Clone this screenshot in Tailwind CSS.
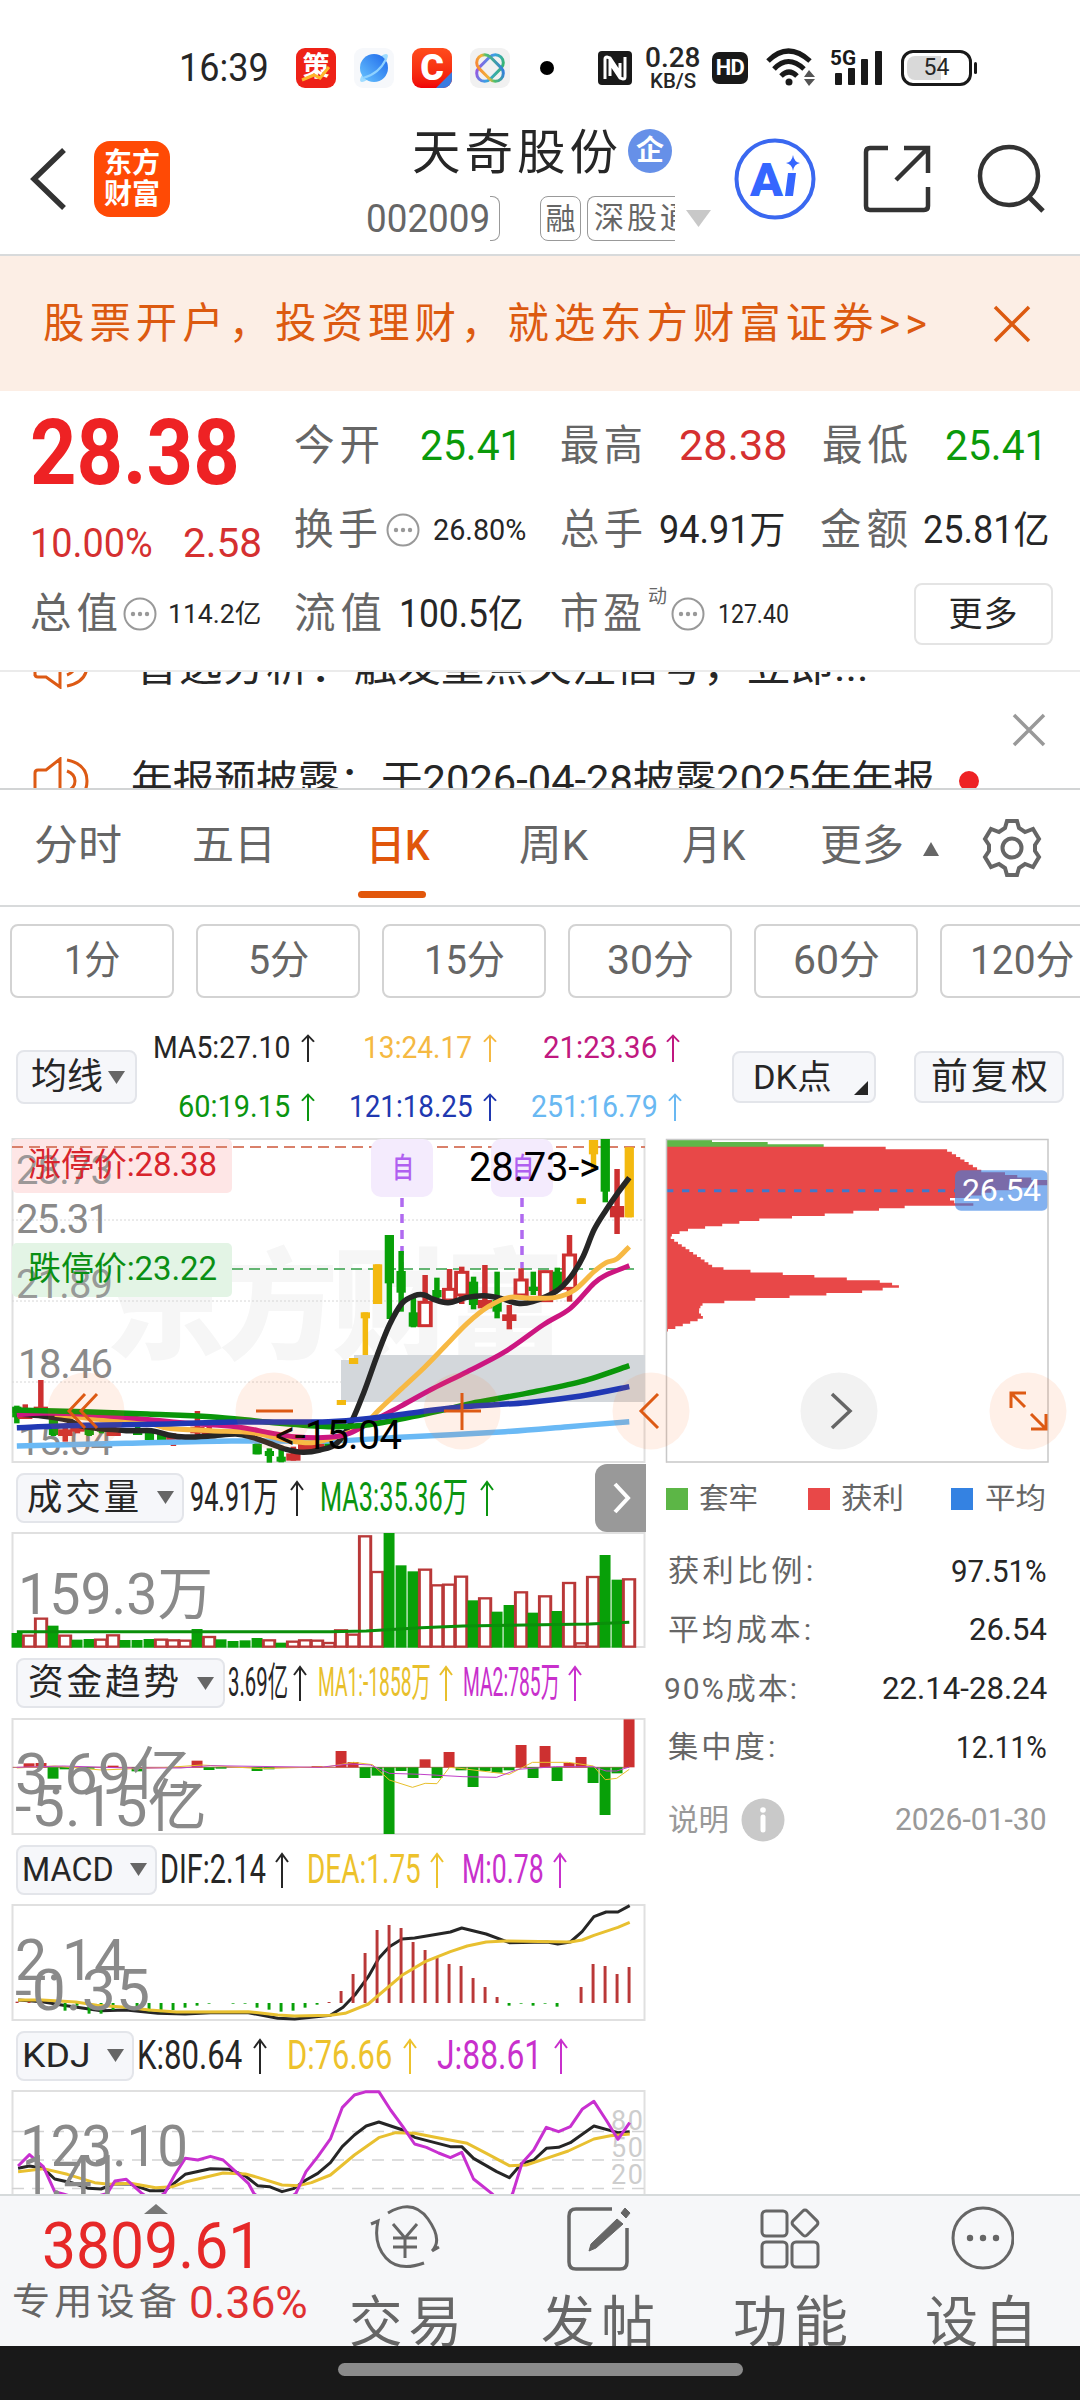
<!DOCTYPE html>
<html lang="zh-CN">
<head>
<meta charset="utf-8">
<title>天奇股份 002009</title>
<script src="https://cdn.jsdelivr.net/npm/@tailwindcss/browser@4"></script>
</head>
<body class="bg-white">
<svg class="hidden">
  <symbol id="up" viewBox="0 0 14 36" preserveAspectRatio="none"><path d="M7 36V2M1 10L7 2l6 8" fill="none" stroke="currentColor" stroke-width="2"/></symbol>
  <symbol id="down" viewBox="0 0 17 13"><path d="M0 0h17L8.500 13z" fill="#666"/></symbol>
  <symbol id="dots" viewBox="0 0 36 36"><circle cx="18" cy="18" r="15.500" fill="none" stroke="#999" stroke-width="2"/><g fill="#999"><circle cx="11" cy="18" r="2.200"/><circle cx="18" cy="18" r="2.200"/><circle cx="25" cy="18" r="2.200"/></g></symbol>
  <symbol id="horn" viewBox="0 0 58 48"><g fill="none" stroke="#dd5a14" stroke-width="3"><path d="M2 35V16q0-3 3-3h8L27 2v44L13 36H5q-3 0-3-3z"/><path d="M34 14q8 3 8 10t-8 10M34 3q20 4 20 21T34 45"/></g></symbol>
</svg>
<div class="w-[1080px] h-[2400px] overflow-hidden flex flex-col bg-white text-[#262626] leading-none font-['Roboto','Noto_Sans_CJK_SC',sans-serif]">

  <!-- status bar -->
  <div class="h-[115px] shrink-0 pt-5 flex items-center">
    <div data-fit class="ml-[179px] w-[90px] text-[38px]">16:39</div>
    <div class="ml-[27px] w-10 h-10 rounded-[9px] bg-[#ee2117] text-white flex items-center justify-center text-[27px] font-bold relative">策<svg class="absolute left-1 bottom-1.5 w-8 h-4" viewBox="0 0 32 16"><path d="M2 14l12-5 6 3 9-11" fill="none" stroke="#ffb52b" stroke-width="3"/></svg></div>
    <svg class="ml-[18px] w-10 h-10" viewBox="0 0 40 40"><defs><linearGradient id="pl" x1="0" y1="1" x2="1" y2="0"><stop offset="0" stop-color="#6ac6ff"/><stop offset="1" stop-color="#1c66ea"/></linearGradient></defs><rect width="40" height="40" rx="9" fill="#f6f8fb"/><ellipse cx="20" cy="20" rx="19" ry="5" transform="rotate(-45 20 20)" fill="#9fdcff"/><circle cx="20" cy="20" r="14" fill="url(#pl)"/><path d="M9 30Q25 26 32 11" stroke="#8fd2ff" stroke-width="2" fill="none"/></svg>
    <div class="ml-[18px] w-10 h-10 rounded-[9px] bg-linear-to-b from-[#ff4b1c] to-[#f00008] text-white flex items-center justify-center text-[36px] font-black relative overflow-hidden">C<svg class="absolute right-0 bottom-0 w-4 h-4" viewBox="0 0 16 16"><path d="M16 0v16H0z" fill="#3a7be0"/></svg></div>
    <svg class="ml-[18px] w-10 h-10" viewBox="0 0 40 40"><defs><linearGradient id="at" x1="0" y1="0" x2="1" y2="1"><stop offset="0" stop-color="#f77b35"/><stop offset=".35" stop-color="#f2b43a"/><stop offset=".5" stop-color="#4fc26a"/><stop offset="1" stop-color="#2d73f0"/></linearGradient><linearGradient id="at2" x1="1" y1="0" x2="0" y2="1"><stop offset="0" stop-color="#35b95c"/><stop offset=".5" stop-color="#3aa0e6"/><stop offset="1" stop-color="#a34fe0"/></linearGradient></defs><rect width="40" height="40" rx="9" fill="#f1f1f1"/><rect x="12" y="4.500" width="16" height="31" rx="8" transform="rotate(45 20 20)" fill="none" stroke="url(#at2)" stroke-width="3"/><rect x="12" y="4.500" width="16" height="31" rx="8" transform="rotate(-45 20 20)" fill="none" stroke="url(#at)" stroke-width="3"/></svg>
    <div class="ml-[30px] w-3.5 h-3.5 rounded-full bg-black"></div>
    <svg class="ml-[44px] w-[34px] h-[34px]" viewBox="0 0 34 34"><rect width="34" height="34" rx="4" fill="#191919"/><path d="M7 28V8q0-2 2-2l3 1 10 15V12M27 6v20q0 2-2 2l-3-1L12 12v13" fill="none" stroke="#fff" stroke-width="3"/></svg>
    <div class="ml-[12px] w-[58px] flex flex-col items-center font-medium"><span data-fit class="w-[56px] text-[27px]">0.28</span><span data-fit class="w-[46px] text-[20px] -mt-px">KB/S</span></div>
    <div class="ml-[10px] w-9 h-8 rounded-[7px] bg-[#191919] text-white text-[22px] font-bold flex items-center justify-center tracking-tight">HD</div>
    <svg class="ml-[18px] w-[50px] h-10" viewBox="0 0 50 40"><g fill="none" stroke="#191919" stroke-width="5"><path d="M2 13q20-20 42 0M8 21q14-15 30 0"/><path d="M15 28q8-8 16 0"/></g><circle cx="23" cy="34" r="3.500" fill="#191919"/><path d="M38 29l5-7 6 7zM38 31l5 7 6-7z" fill="#555"/></svg>
    <svg class="ml-[14px] w-[54px] h-10" viewBox="0 0 54 40"><g fill="#191919"><rect x="5" y="25" width="7" height="12" rx="1"/><rect x="18" y="20" width="7" height="17" rx="1"/><rect x="31" y="11" width="7" height="26" rx="1"/><rect x="45" y="3" width="7" height="34" rx="1"/><text x="0" y="17" font-size="20" font-weight="700" textLength="26" lengthAdjust="spacingAndGlyphs">5G</text></g></svg>
    <div class="ml-[17px] w-[71px] h-[36px] rounded-xl border-[3px] border-[#191919] p-[3px] relative"><div class="w-[34px] h-full rounded-l-lg bg-[#d9d9d9]"></div><span class="absolute inset-0 flex items-center justify-center text-[23px]">54</span></div>
    <div class="ml-[2px] w-[3px] h-3 rounded bg-[#191919]"></div>
  </div>

  <!-- title bar -->
  <div class="h-[141px] shrink-0 border-b-2 border-[#d8dadb] flex">
    <svg class="ml-[30px] mt-[32px] w-[38px] h-[64px]" viewBox="0 0 38 64"><path d="M34 3L4 32l30 29" fill="none" stroke="#333" stroke-width="5.500"/></svg>
    <div class="ml-[26px] mt-[26px] w-[76px] h-[76px] rounded-2xl bg-[#ff4a05] text-white text-[28px] leading-[31px] font-bold flex flex-col items-center justify-center"><span>东方</span><span>财富</span></div>
    <div class="ml-[194px] w-[350px] pt-[10px]">
      <div class="pl-[48px] flex items-center"><span data-fit class="w-[206px] text-[48px] leading-[56px] tracking-[4px]">天奇股份</span><span class="ml-[10px] w-11 h-11 mt-[-4px] rounded-full bg-[#6690e8] text-white text-[28px] font-bold flex items-center justify-center">企</span></div>
      <div class="mt-[15px] flex items-center text-[#666]"><span data-fit class="ml-[2px] w-[124px] text-[38px]">002009</span><span class="w-2.5 h-[45px] border border-l-0 border-[#999] rounded-r-lg"></span><span class="ml-[40px] w-[41px] h-[45px] text-[30px] rounded-lg border border-[#999] flex items-center justify-center">融</span><span class="ml-[6px] w-[88px] h-[45px] overflow-hidden rounded-l-lg border border-r-0 border-[#999] pl-[6px] text-[30px] leading-[42px] tracking-[3px] whitespace-nowrap">深股通</span><svg class="ml-[11px] w-[25px] h-[17px]" viewBox="0 0 25 17"><path d="M0 0h25L12.500 17z" fill="#c8c8c8"/></svg></div>
    </div>
    <svg class="ml-[20px] mt-[22px] w-[84px] h-[84px]" viewBox="0 0 84 84"><circle cx="41" cy="42" r="38.500" fill="none" stroke="#3a68f0" stroke-width="4"/><text x="16" y="59" font-size="47" font-weight="900" fill="#3566ff" textLength="33" lengthAdjust="spacingAndGlyphs">A</text><path d="M54 36h8l-3 23h-8zM59 18q1 7 7 8-6 1-7 8-1-7-7-8 6-1 7-8z" fill="#3566ff"/></svg>
    <svg class="ml-[44px] mt-[28px] w-[72px] h-[72px]" viewBox="0 0 72 72"><path d="M26 5H8q-4 0-4 4v54q0 4 4 4h54q4 0 4-4V44M42 5h24v25M66 5L34 37" fill="none" stroke="#333" stroke-width="4.500"/></svg>
    <svg class="ml-[41px] mt-[26px] w-[74px] h-[74px]" viewBox="0 0 74 74"><circle cx="34" cy="35" r="29" fill="none" stroke="#333" stroke-width="4.500"/><path d="M54 56l14 14" stroke="#333" stroke-width="5"/></svg>
  </div>

  <!-- promo banner -->
  <div class="h-[135px] shrink-0 bg-[#fceee5] text-[#dc5a10] flex items-center">
    <div data-fit class="ml-[43px] w-[884px] text-[42px] tracking-[5px]">股票开户，投资理财，就选东方财富证券&gt;&gt;</div>
    <svg class="ml-[66px] w-[38px] h-[38px]" viewBox="0 0 38 38"><path d="M2 2l34 34M36 2L2 36" stroke="currentColor" stroke-width="3.500"/></svg>
  </div>

  <!-- quote summary -->
  <div class="h-[281px] shrink-0 border-b-2 border-[#ebebeb] relative flex">
    <div class="ml-[30px] w-[235px] pt-[16px] text-[#ee2224]">
      <div data-fit class="w-[210px] text-[90px] leading-[94px] font-bold">28.38</div>
      <div class="mt-[23px] flex text-[40px] text-[#d53030]"><span data-fit class="w-[123px]">10.00%</span><span data-fit class="ml-[30px] w-[79px]">2.58</span></div>
      <div class="mt-[25px] h-[50px] flex items-center"><span data-fit class="w-[88px] text-[42px] tracking-[5px] text-[#666]">总值</span><svg class="ml-[4px] w-9 h-9"><use href="#dots"/></svg><span data-fit class="ml-[10px] w-[93px] text-[26px] text-[#262626]">114.2亿</span></div>
    </div>
    <div class="ml-[29px] w-[786px] pt-[30px] flex flex-col gap-[34px]">
      <div class="h-[50px] flex items-center text-[42px]">
        <span data-fit class="w-[86px] tracking-[5px] text-[#666]">今开</span><span data-fit class="ml-[40px] w-[103px] text-[#0a9a0a]">25.41</span>
        <span data-fit class="ml-[37px] w-[83px] tracking-[5px] text-[#666]">最高</span><span data-fit class="ml-[36px] w-[109px] text-[#d53030]">28.38</span>
        <span data-fit class="ml-[34px] w-[86px] tracking-[5px] text-[#666]">最低</span><span data-fit class="ml-[37px] w-[103px] text-[#0a9a0a]">25.41</span>
      </div>
      <div class="h-[50px] flex items-center text-[42px]">
        <span data-fit class="w-[84px] tracking-[5px] text-[#666]">换手</span><svg class="ml-[7px] w-9 h-9"><use href="#dots"/></svg><span data-fit class="ml-[12px] w-[93px] text-[30px]">26.80%</span>
        <span data-fit class="ml-[34px] w-[83px] tracking-[5px] text-[#666]">总手</span><span data-fit class="ml-[16px] w-[126px] text-[38px]">94.91万</span>
        <span data-fit class="ml-[35px] w-[88px] tracking-[5px] text-[#666]">金额</span><span data-fit class="ml-[15px] w-[126px] text-[38px]">25.81亿</span>
      </div>
      <div class="h-[50px] flex items-center text-[42px]">
        <span data-fit class="w-[88px] tracking-[5px] text-[#666]">流值</span><span data-fit class="ml-[17px] w-[124px] text-[38px]">100.5亿</span>
        <span data-fit class="ml-[37px] w-[82px] tracking-[5px] text-[#666]">市盈</span><span class="ml-[6px] -mt-9 w-5 text-[19px] text-[#666]">动</span><svg class="ml-[2px] w-9 h-9"><use href="#dots"/></svg><span data-fit class="ml-[12px] w-[71px] text-[25px]">127.40</span>
        <span class="ml-[125px] w-[139px] h-[62px] shrink-0 rounded-lg border-2 border-[#e4e4e4] flex items-center justify-center text-[34px] tracking-[1px]">更多</span>
      </div>
    </div>
  </div>

  <!-- rolling news -->
  <div class="h-[118px] shrink-0 border-b-2 border-[#d2d4d5] relative overflow-hidden text-[40px] flex flex-col">
    <div class="-mt-[27px] h-[46px] shrink-0 flex items-center"><svg class="ml-[33px] w-[58px] h-[48px] -mt-1.5"><use href="#horn"/></svg><span data-fit class="ml-[44px] w-[734px]">智选分析：触发重点关注信号，立即...</span></div>
    <svg class="self-end mr-[34px] mt-[22px] w-[34px] h-[34px] shrink-0" viewBox="0 0 34 34"><path d="M2 2l30 30M32 2L2 32" stroke="#999" stroke-width="3.500"/></svg>
    <div class="mt-[11px] h-[46px] shrink-0 flex items-center"><svg class="ml-[33px] w-[58px] h-[48px]"><use href="#horn"/></svg><span data-fit class="ml-[40px] w-[804px]">年报预披露：于2026-04-28披露2025年年报</span><span class="ml-[24px] w-5 h-5 rounded-full bg-[#ee2224]"></span></div>
  </div>

  <!-- period tabs -->
  <div class="h-[117px] shrink-0 border-b-2 border-[#d8dadb] flex text-[42px] text-[#666]">
    <span data-fit class="ml-[34px] w-[88px] leading-[112px]">分时</span>
    <span data-fit class="ml-[70px] w-[84px] leading-[112px]">五日</span>
    <span class="ml-[82px] w-[68px] flex flex-col text-[#e0560b] font-medium"><span data-fit class="ml-[8px] w-[64px] h-[101px] leading-[112px]">日K</span><span class="h-[7px] rounded bg-[#e2570b]"></span></span>
    <span data-fit class="ml-[93px] w-[69px] leading-[112px]">周K</span>
    <span data-fit class="ml-[94px] w-[63px] leading-[112px]">月K</span>
    <span data-fit class="ml-[75px] w-[84px] leading-[112px]">更多</span>
    <svg class="ml-[19px] mt-[52px] w-4 h-3.5" viewBox="0 0 16 14"><path d="M0 14L8 0l8 14z" fill="#666"/></svg>
    <svg class="ml-[42px] mt-[27px] w-[62px] h-[62px]" viewBox="0 0 62 62"><g fill="none" stroke="#666" stroke-width="4"><path d="M26 4h10l2 7 6 4 8-3 6 10-4 6v6l4 6-6 10-8-3-6 4-2 7H26l-2-7-6-4-8 3-6-10 4-6v-6l-4-6 6-10 8 3 6-4z"/><circle cx="31" cy="31" r="9.500"/></g></svg>
  </div>

  <!-- minute periods -->
  <div class="h-[113px] shrink-0 pt-[17px] pl-[10px] flex gap-[22px] overflow-hidden text-[40px] text-[#666]">
    <div class="w-[164px] h-[74px] shrink-0 rounded-lg border-2 border-[#d3d3d3] flex items-center justify-center"><span data-fit class="w-[56px]">1分</span></div>
    <div class="w-[164px] h-[74px] shrink-0 rounded-lg border-2 border-[#d3d3d3] flex items-center justify-center"><span data-fit class="w-[61px]">5分</span></div>
    <div class="w-[164px] h-[74px] shrink-0 rounded-lg border-2 border-[#d3d3d3] flex items-center justify-center"><span data-fit class="w-[81px]">15分</span></div>
    <div class="w-[164px] h-[74px] shrink-0 rounded-lg border-2 border-[#d3d3d3] flex items-center justify-center"><span data-fit class="w-[87px]">30分</span></div>
    <div class="w-[164px] h-[74px] shrink-0 rounded-lg border-2 border-[#d3d3d3] flex items-center justify-center"><span data-fit class="w-[87px]">60分</span></div>
    <div class="w-[164px] h-[74px] shrink-0 rounded-lg border-2 border-[#d3d3d3] flex items-center justify-center"><span data-fit class="w-[104px]">120分</span></div>
  </div>

  <!-- moving-average legend -->
  <div class="h-[118px] shrink-0 flex">
    <div class="ml-[16px] mt-[30px] w-[121px] h-[54px] rounded-lg border-2 border-[#e3e5ea] bg-[#f6f7fa] flex items-center pl-[13px]"><span data-fit class="w-[72px] text-[36px]">均线</span><svg class="ml-[5px] w-[17px] h-[13px]"><use href="#down"/></svg></div>
    <div class="ml-[15px] w-[530px] pt-[10px] flex flex-col gap-[24px] text-[31px]">
      <div class="h-[35px] flex items-center"><span data-fit class="w-[137px] ml-px">MA5:27.10</span><svg class="ml-[11px] w-3.5 h-7"><use href="#up"/></svg>
        <span class="flex items-center text-[#f5b942]"><span data-fit class="ml-[48px] w-[109px]">13:24.17</span><svg class="ml-[11px] w-3.5 h-7"><use href="#up"/></svg></span>
        <span class="flex items-center text-[#c01880]"><span data-fit class="ml-[46px] w-[114px]">21:23.36</span><svg class="ml-[9px] w-3.5 h-7"><use href="#up"/></svg></span></div>
      <div class="h-[35px] flex items-center"><span class="flex items-center text-[#0a9510]"><span data-fit class="ml-[26px] w-[112px]">60:19.15</span><svg class="ml-[11px] w-3.5 h-7"><use href="#up"/></svg></span>
        <span class="flex items-center text-[#2038b0]"><span data-fit class="ml-[34px] w-[124px]">121:18.25</span><svg class="ml-[10px] w-3.5 h-7"><use href="#up"/></svg></span>
        <span class="flex items-center text-[#69b8f2]"><span data-fit class="ml-[34px] w-[127px]">251:16.79</span><svg class="ml-[10px] w-3.5 h-7"><use href="#up"/></svg></span></div>
    </div>
    <div class="ml-[50px] mt-[31px] w-[144px] h-[52px] rounded-lg border-2 border-[#e3e5ea] bg-[#f6f7fa] flex items-center pl-[19px] relative"><span data-fit class="w-[79px] text-[34px]">DK点</span><svg class="absolute right-[6px] bottom-[6px] w-3.5 h-3.5" viewBox="0 0 14 14"><path d="M14 0v14H0z" fill="#262626"/></svg></div>
    <div class="ml-[38px] mt-[31px] w-[150px] h-[52px] rounded-lg border-2 border-[#e3e5ea] bg-[#f6f7fa] flex items-center justify-center"><span data-fit class="w-[117px] text-[36px] tracking-[3px]">前复权</span></div>
  </div>

  <!-- charts -->
  <div class="h-[1056px] shrink-0 relative flex overflow-hidden">
    <div class="w-[646px] flex flex-col">
      <svg class="h-[325px] shrink-0" viewBox="0 1138 646 325">
        <rect x="12.500" y="1139" width="632" height="323" fill="none" stroke="#e0e0e0" stroke-width="2"/>
        <text x="105" y="1350" font-size="120" font-weight="900" fill="#f6f6f6" textLength="460">东方财富</text>
        <path d="M12 1220H645M12 1301H645M12 1382H645" stroke="#d6d6d6" stroke-dasharray="2 2"/>
        <rect x="12" y="1139" width="220" height="54" rx="5" fill="#fee6e6"/><rect x="12" y="1243" width="220" height="54" rx="5" fill="#e3f4e5"/>
        <g font-size="40" fill="#8a8a8a"><g fill-opacity=".85"><text x="16" y="1184" textLength="97">28.73</text></g><text x="16" y="1233" textLength="94">25.31</text><g fill-opacity=".85"><text x="16" y="1298" textLength="97">21.89</text></g><text x="18" y="1378" textLength="95">18.46</text><text x="18" y="1455" textLength="95">15.04</text></g>
        <path d="M341 1360h13v-5h291v47H341z" fill="#d3d7db"/>
        <path d="M12 1147H645" stroke="#d9806a" stroke-width="2" stroke-dasharray="11 6"/>
        <path d="M232 1269H640" stroke="#35a048" stroke-width="1.500" stroke-dasharray="11 6"/>
        <text x="28" y="1176" font-size="33" fill="#d8242c" textLength="189">涨停价:28.38</text>
        <text x="28" y="1280" font-size="33" fill="#0a8f14" textLength="189">跌停价:23.22</text>
        <rect x="371" y="1139" width="62" height="58" rx="10" fill="#f4ebfd"/><rect x="491" y="1139" width="62" height="58" rx="10" fill="#f4ebfd"/>
        <path d="M402 1198v70M522 1198v70" stroke="#b06af0" stroke-width="3.500" stroke-dasharray="9 7"/>
        <g font-size="28" fill="#b060f0" font-weight="500"><text x="392" y="1178" textLength="22" lengthAdjust="spacingAndGlyphs">自</text><text x="512" y="1178" textLength="22" lengthAdjust="spacingAndGlyphs">自</text></g>
        <g id="candles" transform="translate(0 1240) scale(.42092 .33333)"></g>
        <g id="ma" transform="translate(0 1240) scale(.42092 .33333)"></g>
        <text x="275" y="1449" font-size="40" textLength="127">&lt;-15.04</text>
        <text x="469" y="1181" font-size="40" textLength="131">28.73-&gt;</text>
      </svg>

      <div class="h-[69px] shrink-0 pl-4 flex items-center text-[40px]">
        <div class="w-[168px] h-[50px] rounded-lg border-2 border-[#e3e5ea] bg-[#f6f7fa] flex items-center pl-[9px]"><span data-fit class="w-[112px] text-[36px] tracking-[3px]">成交量</span><svg class="ml-[18px] w-[17px] h-[13px]"><use href="#down"/></svg></div>
        <span data-fit class="ml-[6px] w-[88px]">94.91万</span><svg class="ml-[12px] w-3.5 h-9"><use href="#up"/></svg>
        <span class="flex items-center text-[#0a9510]"><span data-fit class="ml-[16px] w-[148px]">MA3:35.36万</span><svg class="ml-[12px] w-3.5 h-9"><use href="#up"/></svg></span>
        <div class="ml-auto w-[51px] h-[68px] rounded-l-xl bg-[#999] flex items-center justify-center"><svg class="w-6 h-8" viewBox="0 0 24 32"><path d="M6 2l13 14L6 30" fill="none" stroke="#fff" stroke-width="4"/></svg></div>
      </div>
      <svg class="h-[116px] shrink-0" viewBox="0 1532 646 116">
        <rect x="12.500" y="1533" width="632" height="114" fill="none" stroke="#e0e0e0" stroke-width="2"/>
        <g id="volume" transform="translate(0 1460) scale(.42092 .33333)"></g>
        <text x="18" y="1614" font-size="57" fill="#8a8a8a" textLength="195" lengthAdjust="spacingAndGlyphs">159.3万</text>
      </svg>

      <div class="h-[70px] shrink-0 pl-4 flex items-center text-[40px]">
        <div class="w-[209px] h-[50px] rounded-lg border-2 border-[#e3e5ea] bg-[#f6f7fa] flex items-center pl-[10px]"><span data-fit class="w-[151px] text-[36px] tracking-[3px]">资金趋势</span><svg class="ml-[18px] w-[17px] h-[13px]"><use href="#down"/></svg></div>
        <span data-fit class="ml-[3px] w-[60px]">3.69亿</span><svg class="ml-[5px] w-3.5 h-9"><use href="#up"/></svg>
        <span class="flex items-center text-[#e8bf2c]"><span data-fit class="ml-[11px] w-[113px]">MA1:-1858万</span><svg class="ml-[8px] w-3.5 h-9"><use href="#up"/></svg></span>
        <span class="flex items-center text-[#c830cc]"><span data-fit class="ml-[10px] w-[97px]">MA2:785万</span><svg class="ml-[8px] w-3.5 h-9"><use href="#up"/></svg></span>
      </div>
      <svg class="h-[117px] shrink-0" viewBox="0 1718 646 117">
        <rect x="12.500" y="1719" width="632" height="115" fill="none" stroke="#e0e0e0" stroke-width="2"/>
        <g id="fund" transform="translate(0 1460) scale(.42092 .33333)"></g>
        <g font-size="57" fill="#8a8a8a"><text x="15" y="1794" textLength="176" lengthAdjust="spacingAndGlyphs">3.69亿</text><text x="15" y="1826" textLength="192" lengthAdjust="spacingAndGlyphs">-5.15亿</text></g>
      </svg>

      <div class="h-[69px] shrink-0 pl-4 flex items-center text-[40px]">
        <div class="w-[141px] h-[50px] rounded-lg border-2 border-[#e3e5ea] bg-[#f6f7fa] flex items-center pl-[4px]"><span data-fit class="w-[92px] text-[33px]">MACD</span><svg class="ml-[16px] w-[17px] h-[13px]"><use href="#down"/></svg></div>
        <span data-fit class="ml-[3px] w-[106px]">DIF:2.14</span><svg class="ml-[9px] w-3.5 h-9"><use href="#up"/></svg>
        <span class="flex items-center text-[#edc22c]"><span data-fit class="ml-[18px] w-[114px]">DEA:1.75</span><svg class="ml-[9px] w-3.5 h-9"><use href="#up"/></svg></span>
        <span class="flex items-center text-[#c830cc]"><span data-fit class="ml-[18px] w-[82px]">M:0.78</span><svg class="ml-[9px] w-3.5 h-9"><use href="#up"/></svg></span>
      </div>
      <svg class="h-[117px] shrink-0" viewBox="0 1904 646 117">
        <rect x="12.500" y="1905" width="632" height="115" fill="none" stroke="#e0e0e0" stroke-width="2"/>
        <g id="macd" transform="translate(0 1820) scale(.42092 .33333)"></g>
        <g font-size="57" fill="#8a8a8a"><text x="15" y="1980" textLength="111" lengthAdjust="spacingAndGlyphs">2.14</text><text x="15" y="2010" textLength="135" lengthAdjust="spacingAndGlyphs">-0.35</text></g>
      </svg>

      <div class="h-[69px] shrink-0 pl-4 flex items-center text-[40px]">
        <div class="w-[118px] h-[50px] rounded-lg border-2 border-[#e3e5ea] bg-[#f6f7fa] flex items-center pl-[4px]"><span data-fit class="w-[69px] text-[33px]">KDJ</span><svg class="ml-[16px] w-[17px] h-[13px]"><use href="#down"/></svg></div>
        <span data-fit class="ml-[3px] w-[105px]">K:80.64</span><svg class="ml-[11px] w-3.5 h-9"><use href="#up"/></svg>
        <span class="flex items-center text-[#edc22c]"><span data-fit class="ml-[20px] w-[105px]">D:76.66</span><svg class="ml-[11px] w-3.5 h-9"><use href="#up"/></svg></span>
        <span class="flex items-center text-[#c830cc]"><span data-fit class="ml-[20px] w-[105px]">J:88.61</span><svg class="ml-[12px] w-3.5 h-9"><use href="#up"/></svg></span>
      </div>
      <svg class="h-[104px] shrink-0" viewBox="0 2090 646 104">
        <rect x="12.500" y="2091" width="632" height="120" fill="none" stroke="#e0e0e0" stroke-width="2"/>
        <path d="M12 2131.500H645M12 2160H645M12 2188.500H645" stroke="#d3d3d3" stroke-width="1.500" stroke-dasharray="12 8"/>
        <g font-size="27" fill="#cdcdcd"><text x="611" y="2130" textLength="32">80</text><text x="611" y="2157" textLength="32">50</text><text x="611" y="2184" textLength="32">20</text></g>
        <g id="kdj" transform="translate(0 1820) scale(.42092 .33333)"></g>
        <g font-size="57" fill="#8a8a8a"><text x="20" y="2166" textLength="168" lengthAdjust="spacingAndGlyphs">123.10</text><text x="22" y="2196" textLength="98" lengthAdjust="spacingAndGlyphs">1.41</text></g>
      </svg>
    </div>

    <div class="w-[434px] flex flex-col">
      <svg class="h-[325px] w-[434px] shrink-0" viewBox="646 1138 434 325">
        <g transform="translate(640 1120) scale(.33333)">
          <path d="M78 58H216v8H383v7H551v8H78z" fill="#5fb648"/>
          <path id="chips" fill="#e84848"/>
          <path d="M78 212H945" stroke="#4377c9" stroke-width="9" stroke-dasharray="22 26"/>
          <rect x="945" y="151" width="279" height="121" rx="18" fill="#3781e5" fill-opacity=".62"/>
        </g>
        <path d="M666.500 1139.500H1048V1462H666.500z" fill="none" stroke="#c8c8c8" stroke-width="1.500"/>
        <text x="962" y="1201" font-size="32" fill="#fff" textLength="79">26.54</text>
      </svg>
      <div class="mt-[14px] ml-[20px] h-[44px] flex items-center text-[29px] text-[#666]">
        <span class="w-[22px] h-[22px] bg-[#5cb646]"></span><span data-fit class="ml-[11px] w-[59px]">套牢</span>
        <span class="ml-[50px] w-[22px] h-[22px] bg-[#e84848]"></span><span data-fit class="ml-[11px] w-[63px]">获利</span>
        <span class="ml-[47px] w-[22px] h-[22px] bg-[#3482e2]"></span><span data-fit class="ml-[12px] w-[61px]">平均</span>
      </div>
      <div class="ml-[22px] w-[379px] mt-[21px] text-[31px] flex flex-col">
        <div class="h-[58px] flex items-center justify-between"><span data-fit class="w-[145px] text-[30px] tracking-[3px] text-[#666]">获利比例:</span><span data-fit class="w-[96px]">97.51%</span></div>
        <div class="h-[59px] flex items-center justify-between"><span data-fit class="w-[143px] text-[30px] tracking-[3px] text-[#666]">平均成本:</span><span data-fit class="w-[78px]">26.54</span></div>
        <div class="h-[59px] flex items-center justify-between"><span data-fit class="-ml-1 w-[133px] text-[30px] tracking-[2px] text-[#666]">90%成本:</span><span data-fit class="w-[165px]">22.14-28.24</span></div>
        <div class="h-[58px] flex items-center justify-between"><span data-fit class="w-[107px] text-[30px] tracking-[3px] text-[#666]">集中度:</span><span data-fit class="w-[91px]">12.11%</span></div>
        <div class="h-[87px] flex items-center text-[#999]"><span data-fit class="w-[61px] text-[30px]">说明</span><svg class="ml-[12px] w-[44px] h-[44px]" viewBox="0 0 44 44"><circle cx="22" cy="22" r="21.500" fill="#c9c9c9"/><circle cx="22" cy="12" r="2.800" fill="#fff"/><path d="M22 19v13" stroke="#fff" stroke-width="5" stroke-linecap="round"/></svg><span data-fit class="ml-auto w-[152px]">2026-01-30</span></div>
      </div>
    </div>

    <!-- floating chart controls -->
    <svg class="absolute left-0 top-[230px] w-[1080px] h-[86px]" viewBox="0 1368 1080 86">
      <g fill="#ff6a1a" fill-opacity=".1"><circle cx="86" cy="1411" r="38.500"/><circle cx="274" cy="1411" r="38.500"/><circle cx="462" cy="1411" r="38.500"/><circle cx="651" cy="1411" r="38.500"/><circle cx="1028" cy="1411" r="38.500"/></g>
      <circle cx="839" cy="1411" r="38.500" fill="#f2f2f2"/>
      <g fill="none" stroke="#dd5a14" stroke-width="3"><path d="M85 1394l-16 17 16 17M97 1394l-16 17 16 17M256 1411h37M444 1411h37M462 1393v37M658 1394l-17 17 17 17M1011 1408v-15h15M1011 1393l14 14M1046 1414v15h-15M1046 1429l-15-15"/></g>
      <path d="M832 1394l18 17-18 17" fill="none" stroke="#666" stroke-width="3.500"/>
    </svg>
  </div>

  <!-- bottom navigation -->
  <div class="h-[152px] shrink-0 bg-[#f6f7f9] border-t-2 border-[#d6dadb] flex overflow-hidden text-[#666]">
    <div class="w-[312px] pl-[12px] flex flex-col">
      <svg class="ml-[132px] mt-[8px] w-6 h-2.5" viewBox="0 0 24 10"><path d="M0 10L12 0l12 10z" fill="#777"/></svg>
      <span data-fit class="ml-[30px] w-[220px] text-[65px] text-[#e62828]">3809.61</span>
      <div class="mt-px flex items-center"><span data-fit class="w-[165px] text-[37px] tracking-[4px]">专用设备</span><span data-fit class="ml-[12px] w-[119px] text-[45px] text-[#e03030]">0.36%</span></div>
    </div>
    <div class="w-[186px] pt-[8px] flex flex-col items-center">
      <svg class="w-[74px] h-[68px] shrink-0" viewBox="0 0 74 68"><g fill="none" stroke="#666" stroke-width="3"><path d="M20 9Q45-6 60 15T64 47M3 20l7-3Q5 40 18 54T56 59M64 47l7-4"/><path d="M25 20l12 14 12-14M37 34v20M25 34h24M25 43h24"/></g></svg>
      <span data-fit class="mt-[20px] w-[113px] text-[55px] leading-[60px] tracking-[6px]">交易</span>
    </div>
    <div class="w-[200px] pt-[8px] flex flex-col items-center">
      <svg class="w-[68px] h-[68px] shrink-0" viewBox="0 0 68 68"><g fill="none" stroke="#666" stroke-width="3.500"><path d="M48 5H12q-7 0-7 7v46q0 7 7 7h44q7 0 7-7V24"/></g><path d="M53 15l6 5-27 24-7 3 2-7zM57 9l4-5 5 5-4 5z" fill="#666" stroke="#666"/></svg>
      <span data-fit class="mt-[20px] w-[114px] text-[55px] leading-[60px] tracking-[6px]">发帖</span>
    </div>
    <div class="w-[184px] pt-[8px] flex flex-col items-center">
      <svg class="w-[64px] h-[68px] shrink-0" viewBox="0 0 64 68"><g fill="none" stroke="#666" stroke-width="3"><rect x="4" y="7" width="25" height="25" rx="4"/><rect x="4" y="38" width="25" height="25" rx="4"/><rect x="34" y="38" width="26" height="25" rx="4"/><rect x="37" y="9" width="20" height="20" rx="3" transform="rotate(45 47 19)"/></g></svg>
      <span data-fit class="mt-[20px] w-[115px] text-[55px] leading-[60px] tracking-[6px]">功能</span>
    </div>
    <div class="w-[198px] pt-[8px] flex flex-col items-center">
      <svg class="w-[66px] h-[68px] shrink-0" viewBox="0 0 66 68"><circle cx="35" cy="34" r="30" fill="none" stroke="#666" stroke-width="3"/><g fill="#666"><circle cx="22" cy="34" r="3.200"/><circle cx="35" cy="34" r="3.200"/><circle cx="48" cy="34" r="3.200"/></g></svg>
      <span data-fit class="mt-[20px] w-[112px] text-[55px] leading-[60px] tracking-[6px]">设自</span>
    </div>
  </div>
  <div class="h-[54px] shrink-0 bg-[#191919] flex justify-center pt-[17px]"><div class="w-[405px] h-[13px] rounded-full bg-[#8b8b8b]"></div></div>
</div>

<script>
// Condense or widen a label so that it fills its column, again whenever its size changes.
const fit = inner => {
  const el = inner.parentElement;
  const box = parseFloat(getComputedStyle(el).width);
  const ls = parseFloat(getComputedStyle(el).letterSpacing) || 0;
  if (box > 0 && inner.offsetWidth > 0) inner.style.transform = `scaleX(${box / (inner.offsetWidth - ls)})`;
};
const watcher = new ResizeObserver(list => list.forEach(e => fit(e.target.dataset.inner ? e.target : e.target.firstElementChild)));
document.querySelectorAll('[data-fit]').forEach(el => {
  const inner = document.createElement('span');
  inner.dataset.inner = '1';
  inner.style.cssText = 'display:inline-block;white-space:nowrap;transform-origin:0 50%';
  inner.textContent = el.textContent;
  el.textContent = '';
  el.style.flexShrink = 0;
  el.style.whiteSpace = 'nowrap';
  el.appendChild(inner);
  watcher.observe(el);
  watcher.observe(inner);
});
addEventListener('load', () => document.querySelectorAll('[data-inner]').forEach(fit));

const RED = '#cd3030', GREEN = '#08a008', GOLD = '#f3b90f', STEP = 28.51;
const cx = i => 40.5 + i * STEP;
const rect = (x, y, w, h, fill, extra = '') => `<rect x="${x}" y="${y}" width="${w}" height="${h}" fill="${fill}" ${extra}/>`;
const line = (pts, color, w) => `<polyline points="${pts}" fill="none" stroke="${color}" stroke-width="${w}" stroke-linejoin="round" vector-effect="non-scaling-stroke"/>`;
const put = (id, s) => document.getElementById(id).innerHTML = s;
// Catmull-Rom smoothing for the moving averages
const curve = (str, color, w) => {
  const p = str.split(' ').map(s => s.split(',').map(Number));
  let d = `M${p[0]}`;
  for (let i = 0; i < p.length - 1; i++) {
    const a = p[i - 1] || p[i], b = p[i], c = p[i + 1], e = p[i + 2] || c;
    d += `C${b[0] + (c[0] - a[0]) / 6} ${b[1] + (c[1] - a[1]) / 6} ${c[0] - (e[0] - b[0]) / 6} ${c[1] - (e[1] - b[1]) / 6} ${c[0]} ${c[1]}`;
  }
  return `<path d="${d}" fill="none" stroke="${color}" stroke-width="${w}" vector-effect="non-scaling-stroke"/>`;
};

// candles: [x, bodyTop, bodyBottom, wickTop, wickBottom, colour, hollow]
const C = [
  [40,500,532,497,550,'g'],[60,515,537,493,537,'r'],[97,500,520,420,520,'r'],[127,535,585,520,588,'g'],[155,568,588,560,605,'r'],[184,560,575,550,580,'r'],[212,560,585,550,588,'g'],[241,560,575,555,580,'g'],
  [270,572,588,560,588,'r'],[327,572,585,560,585,'g'],[355,575,600,570,602,'g'],[384,582,600,575,602,'g'],[412,585,600,580,618,'r'],[469,560,580,513,595,'r'],[497,570,590,560,592,'r'],
  [611,612,643,605,643,'g'],[640,633,648,625,668,'g'],[668,650,665,620,667,'g'],[697,640,662,620,662,'r'],[725,612,635,605,635,'r'],[754,605,628,600,628,'r'],[782,600,620,590,625,'g'],
  [811,480,495,480,495,'y'],[840,354,372,354,372,'y'],[868,217,235,217,345,'y'],[897,73,192,73,192,'y'],
  [925,-15,130,-15,237,'g'],[953,93,158,33,215,'g'],[982,217,260,170,262,'g'],[1010,187,257,105,187,'r',1],[1038,150,172,113,175,'g'],[1068,148,180,87,195,'r',1],[1097,97,165,80,192,'r',1],[1125,125,195,110,208,'g'],
  [1152,180,205,75,210,'r'],[1181,180,215,95,235,'g'],[1210,223,243,195,268,'r'],[1238,120,165,85,175,'r',1],[1267,140,153,95,165,'g'],[1296,95,182,92,95,'r',1],[1324,95,150,83,150,'g'],[1353,45,145,-15,185,'r',1],
  [1381,-125,-108,-125,-108,'y'],[1410,-300,-257,-300,-212,'y'],[1438,-303,-145,-303,-113,'g'],[1466,-102,-68,-213,-18,'r'],[1495,-278,-68,-278,-68,'y']
];
const col = { r: RED, g: GREEN, y: GOLD };
put('candles', C.map(([x, t, b, wt, wb, c, h]) =>
  rect(x - 6.500, wt, 13, wb - wt, col[c]) +
  (h ? rect(x - 13.500, t, 27, b - t, '#fff', `stroke="${RED}" stroke-width="9"`) : rect(x - (c == 'g' || c == 'y' ? 11 : 17), t, (c == 'g' || c == 'y' ? 22 : 34), b - t, col[c]))).join(''));
put('ma',
  curve('40,618 300,610 550,603 780,603 950,592 1200,575 1350,560 1495,545', '#6ab9f5', 5.5) +
  curve('40,522 100,528 160,540 200,560 300,572 360,572 400,585 440,591 500,588 560,582 600,592 640,610 680,628 720,637 760,630 800,610 835,545 865,455 895,350 925,255 955,190 985,167 1008,165 1030,178 1065,188 1110,172 1150,167 1190,175 1230,190 1265,185 1320,155 1355,112 1385,50 1411,-30 1440,-90 1470,-145 1495,-187', '#262626', 5.5) +
  curve('130,523 250,540 340,545 400,565 500,572 600,578 680,600 740,608 800,590 860,560 900,510 955,445 1010,380 1060,315 1110,250 1160,200 1210,172 1260,175 1320,172 1365,150 1411,95 1440,68 1465,57 1495,20', '#f7b944', 5) +
  curve('40,525 100,520 200,523 340,537 450,550 560,560 640,578 700,590 780,592 830,580 890,540 950,500 1030,445 1110,395 1200,335 1290,255 1355,205 1411,130 1440,105 1495,77', '#cc1680', 5) +
  curve('30,510 200,515 350,522 500,530 640,547 780,560 870,555 980,530 1060,508 1120,490 1250,460 1380,425 1495,377', '#0a960a', 5.5) +
  curve('40,563 200,556 400,552 550,546 780,545 900,532 1000,515 1100,500 1250,488 1380,468 1495,440', '#2038b4', 5.5));

// turnover
const V = 'g519 r524 r473 g497 r524 g539 g537 r536 r523 g540 g540 g537 r536 r538 r539 g507 r528 g538 g543 g541 g534 r538 g548 r542 r538 r539 r546 r508 r521 r226 r333 g219 g316 g334 r326 r373 r371 r347 g421 r412 g455 g435 r394 g458 r406 g453 r366 r547 r348 g285 g359 r355'.split(' ');
put('volume', V.map((s, i) => {
  const t = +s.slice(1);
  return s[0] == 'g' ? rect(cx(i) - 13, t, 26, 563 - t, GREEN) : rect(cx(i) - 13.500, t + 3, 27, 557 - t, '#fff', 'stroke="#b93838" stroke-width="7"');
}).join('') + line('40,515 785,515 870,513 1000,503 1100,498 1250,495 1400,492 1495,487', '#0a8f0a', 3));

// capital flow around its zero line
const F = { 1: 910, 2: 909, 3: 956, 4: 928, 6: 926, 8: 917, 10: 934, 15: 902, 16: 930, 17: 926, 20: 933, 21: 928, 25: 918, 27: 873, 28: 906, 29: 954, 30: 947, 31: 1122, 32: 933, 33: 954, 34: 898, 35: 954, 36: 876, 37: 931, 38: 981, 39: 933, 40: 938, 41: 931, 42: 855, 43: 954, 44: 858, 45: 963, 46: 909, 47: 891, 48: 969, 49: 1065, 50: 940, 51: 778 };
put('fund', line('30,922 1495,922', '#b8605a', 1) + Object.entries(F).map(([i, v]) => v < 922 ? rect(cx(+i) - 13, v, 26, 922 - v, RED) : rect(cx(+i) - 13, 922, 26, v - 922, GREEN)).join('') +
  line('40,924 130,918 240,930 400,922 480,915 620,926 780,920 840,907 885,914 925,960 980,982 1010,970 1038,971 1068,922 1100,926 1150,934 1210,943 1265,907 1350,907 1410,918 1438,959 1465,955 1495,928', '#e8bf2c', 1) +
  line('40,922 150,918 300,924 430,924 500,917 760,922 830,912 880,915 925,940 1000,943 1100,950 1180,952 1230,928 1320,920 1410,920 1440,933 1465,933 1495,921', '#c040c8', 1));

const M = { 0: 545, 1: 546, 2: 546, 4: 572, 5: 557, 6: 581, 7: 581, 8: 570, 9: 566, 10: 564, 11: 575, 12: 577, 13: 570, 14: 563, 15: 557, 16: 551, 18: 551, 19: 551, 20: 563, 21: 569, 22: 575, 23: 572, 24: 563, 25: 554, 26: 546, 27: 513, 28: 462, 29: 399, 30: 330, 31: 315, 32: 324, 33: 366, 34: 390, 35: 414, 36: 432, 37: 438, 38: 474, 39: 501, 40: 531, 41: 557, 42: 551, 43: 557, 44: 551, 45: 560, 47: 501, 48: 432, 49: 438, 50: 462, 51: 441 };
put('macd', line('43,540 100,545 150,556 240,572 300,570 375,580 440,582 500,578 590,578 660,595 700,597 785,586 815,562 843,525 875,470 900,415 925,380 955,357 985,354 1070,336 1097,324 1155,342 1210,368 1300,366 1325,372 1355,366 1383,335 1411,290 1440,276 1468,276 1496,257', '#262626', 3) +
  Object.entries(M).map(([i, v]) => v < 549 ? rect(cx(+i) - 3.500, v, 7, 549 - v, '#b93838') : rect(cx(+i) - 3.500, 549, 7, v - 549, GREEN)).join('') +
  line('43,540 100,540 180,546 230,556 300,562 355,570 420,576 590,575 660,585 700,588 785,586 820,580 875,552 900,525 955,466 1010,425 1070,395 1110,378 1155,366 1200,363 1355,366 1383,360 1411,346 1468,322 1496,307', '#e8c030', 3));

put('kdj', line('43,1045 70,1038 103,1045 130,1077 170,1088 210,1105 240,1107 270,1092 310,1092 355,1112 392,1112 440,1063 500,1046 545,1048 583,1068 612,1097 640,1100 670,1115 697,1106 727,1080 755,1060 785,1028 813,980 842,945 870,918 900,906 957,930 985,952 1070,980 1097,980 1125,1015 1180,1055 1210,1073 1240,1030 1268,1020 1298,985 1327,982 1355,968 1411,918 1468,938 1496,935', '#262626', 3) +
  line('43,1055 103,1046 160,1063 225,1088 260,1093 310,1090 370,1103 410,1100 440,1086 530,1059 583,1062 612,1072 670,1095 710,1097 740,1088 785,1065 842,1005 900,953 940,938 985,940 1040,953 1110,970 1160,1003 1210,1037 1250,1035 1298,1015 1350,993 1411,957 1450,947 1496,942', '#e8c030', 3) +
  line('43,1038 70,1004 103,1040 130,1115 150,1122 200,1140 255,1120 273,1083 300,1078 335,1118 365,1145 392,1118 415,1065 440,1015 470,1020 500,1009 530,1020 560,1055 590,1090 603,1120 650,1170 703,1120 727,1055 755,1010 785,957 813,863 842,825 870,815 900,815 928,870 957,920 985,972 1013,982 1042,999 1070,1013 1097,997 1125,1077 1168,1120 1200,1160 1218,1120 1240,1030 1268,990 1298,922 1327,935 1355,920 1383,868 1411,844 1440,900 1468,958 1496,908', '#c830d0', 3));

// cost distribution: [price row, extent], drawn as a stepped histogram
const P = [[80,737],[86,918],[92,930],[150,1025],[158,1105],[168,1145],[180,1223],[190,1223],[200,1150],[208,1065],[225,1000],[234,930],[240,868],[243,1000],[250,1000],[255,815],[277,595],[297,340],[327,140],[342,95],[350,92],[438,222],[445,273],[455,400],[468,560],[482,740],[497,780],[512,660],[525,470],[540,270],[550,185],[570,175],[590,190],[628,80],[1026,80]];
let d = 'M78 80';
for (let y = 80; y < 1026; y += 7.700) {
  const k = P.findIndex(p => p[0] > y), b = P[k], a = P[k - 1];
  const w = a[1] + (b[1] - a[1]) * (y - a[0]) / (b[0] - a[0]);
  d += `H${w}v7.700`;
}
document.getElementById('chips').setAttribute('d', d + 'H78z');
</script>
</body>
</html>
